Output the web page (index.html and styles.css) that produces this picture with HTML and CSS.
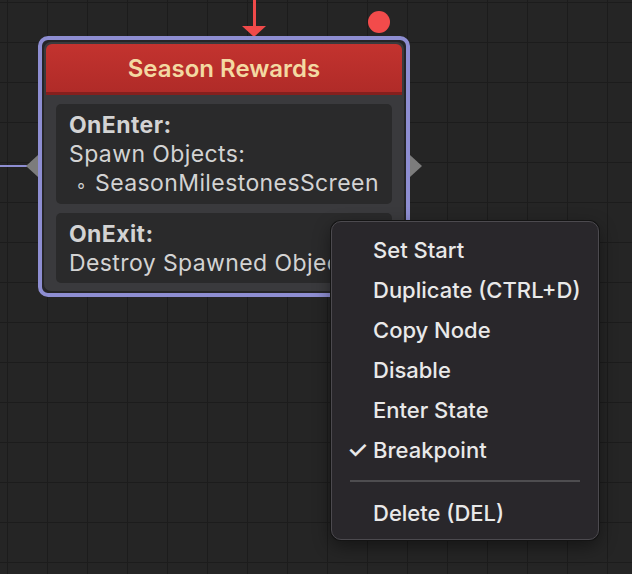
FILE: index.html
```html
<!DOCTYPE html>
<html lang="en">
<head>
    <meta charset="UTF-8">
    <title>State Graph</title>
    <link rel="stylesheet" href="styles.css">
</head>
<body>
    <div class="canvas">

        <!-- incoming transition -->
        <div class="arrow-line"></div>
        <div class="arrow-head"></div>
        <div class="breakpoint-dot"></div>

        <div class="link-left"></div>
        <div class="port port-left"></div>
        <div class="port port-right"></div>

        <div class="node">
            <div class="frame">
                <div class="node-header">Season Rewards</div>
                <div class="node-body">
                    <div class="section">
                        <div class="sec-title">OnEnter:</div>
                        <div class="sec-line">Spawn Objects:</div>
                        <div class="sec-line sub"><span class="bullet">◦</span>SeasonMilestonesScreen</div>
                    </div>
                    <div class="section">
                        <div class="sec-title">OnExit:</div>
                        <div class="sec-line">Destroy Spawned Objects</div>
                    </div>
                </div>
            </div>
        </div>

        <!-- right click menu -->
        <div class="menu">
            <div class="menu-item">Set Start</div>
            <div class="menu-item">Duplicate (CTRL+D)</div>
            <div class="menu-item">Copy Node</div>
            <div class="menu-item">Disable</div>
            <div class="menu-item">Enter State</div>
            <div class="menu-item checked"><span class="check">✓</span>Breakpoint</div>
            <div class="menu-sep"></div>
            <div class="menu-item">Delete (DEL)</div>
        </div>
    </div>
</body>
</html>
```

FILE: styles.css
```css
html, body {
  margin: 0;
  padding: 0;
}

body {
  width: 632px;
  height: 574px;
  overflow: hidden;
  font-family: "Inter", "Noto Sans", sans-serif;
}

.canvas {
  position: relative;
  width: 632px;
  height: 574px;
  background-color: #252525;
  background-image:
    linear-gradient(to right, #1c1c1c 1px, transparent 1px),
    linear-gradient(to bottom, #1c1c1c 1px, transparent 1px);
  background-size: 40px 40px;
  background-position: 7px 2px;
}

/* transition arrow */
.arrow-line {
  position: absolute;
  left: 253px;
  top: 0;
  width: 3px;
  height: 28px;
  background: #f04a4a;
}

.arrow-head {
  position: absolute;
  left: 242px;
  top: 26px;
  width: 0;
  height: 0;
  border-left: 12px solid transparent;
  border-right: 12px solid transparent;
  border-top: 11px solid #f04a4a;
}

.breakpoint-dot {
  position: absolute;
  left: 368px;
  top: 11px;
  width: 22px;
  height: 22px;
  border-radius: 50%;
  background: #f24b4b;
}

.link-left {
  position: absolute;
  left: 0;
  top: 165px;
  width: 28px;
  height: 2px;
  background: #8e8ed2;
}

.port {
  position: absolute;
  top: 155px;
  width: 0;
  height: 0;
  border-top: 11px solid transparent;
  border-bottom: 11px solid transparent;
}

.port-left {
  left: 26px;
  border-right: 12px solid #7c7c7c;
}

.port-right {
  left: 410px;
  border-left: 12px solid #7c7c7c;
}

/* the node */
.node {
  position: absolute;
  left: 38px;
  top: 36px;
  width: 372px;
  height: 261px;
  box-sizing: border-box;
  border: 4px solid #8e8ed2;
  border-radius: 10px;
  background: #252527;
  padding: 2px;
}

.frame {
  height: 100%;
  box-sizing: border-box;
  background: #3a3a3d;
  border-radius: 7px;
  padding: 2px;
}

.node-header {
  height: 51px;
  box-sizing: border-box;
  border-radius: 6px 6px 0 0;
  background: linear-gradient(#c3332f, #b02b28);
  border-bottom: 3px solid #85201e;
  color: #f3d9a2;
  font-weight: 600;
  font-size: 24px;
  text-align: center;
  line-height: 50px;
}

.node-body {
  padding: 9px 10px 0 10px;
  display: flex;
  flex-direction: column;
  gap: 9px;
}

.section {
  background: #2a2a2b;
  border-radius: 5px;
  padding: 7px 13px 5px 13px;
  color: #d3d3d3;
  font-size: 23px;
  letter-spacing: 0.4px;
  line-height: 29px;
  white-space: nowrap;
  overflow: hidden;
}

.sec-title {
  font-weight: 700;
}

.sub .bullet {
  display: inline-block;
  width: 26px;
  padding-left: 7px;
  box-sizing: border-box;
  font-size: 18px;
}

/* context menu */
.menu {
  position: absolute;
  left: 331px;
  top: 221px;
  width: 268px;
  height: 319px;
  box-sizing: border-box;
  padding: 8px 0 8px 0;
  background: #29272b;
  border: 1px solid #4c4a4f;
  border-radius: 10px;
  box-shadow: 0 0 0 1px #141414, 0 6px 18px rgba(0, 0, 0, 0.45);
}

.menu-item {
  position: relative;
  height: 40px;
  line-height: 40px;
  padding-left: 41px;
  color: #e9e9e9;
  font-size: 22px;
  font-weight: 500;
}

.check {
  position: absolute;
  left: 15px;
  top: 0;
  font-size: 24px;
}

.menu-sep {
  height: 2px;
  margin: 10px 18px 11px 18px;
  background: #4e4d50;
}
```
